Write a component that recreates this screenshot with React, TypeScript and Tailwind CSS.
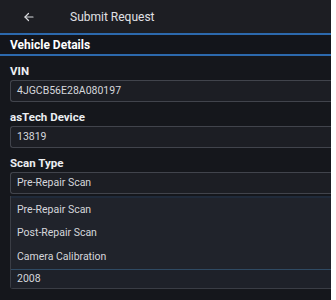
import React from 'react';

const Field: React.FC<{ label: string; value: string }> = ({ label, value }) => (
  <div className="flex flex-col pt-[8px]">
    <div className="h-[16px] flex items-center text-[11.5px] font-bold text-[#eceef2]">{label}</div>
    <div className="h-[22px] flex items-center rounded-l-[3px] border border-r-0 border-[#41444c] bg-[#1c1e24] pl-[6px] text-[10.5px] text-[#d5d7dc]">
      {value}
    </div>
  </div>
);

const App: React.FC = () => {
  const options = ['Pre-Repair Scan', 'Post-Repair Scan', 'Camera Calibration'];

  return (
    <div className="w-[336px] h-[300px] bg-white overflow-hidden" style={{ fontFamily: 'Roboto, "Noto Sans", sans-serif' }}>
      <div className="w-[331px] h-[300px] bg-[#15171c] flex flex-col">
        {/* Header */}
        <header className="h-[35px] shrink-0 flex items-center bg-[#1d1e23] border-b-2 border-[#2c69ad]">
          <svg width="12" height="12" viewBox="0 0 24 24" className="ml-[23px] text-[#d8d9dd]" fill="none" stroke="currentColor" strokeWidth="2.4" strokeLinecap="round" strokeLinejoin="round">
            <path d="M20 12H4" />
            <path d="M11 5l-7 7 7 7" />
          </svg>
          <span className="ml-[35px] text-[12px] text-[#e0e1e5]">Submit Request</span>
        </header>

        {/* Section title */}
        <div className="h-[21px] shrink-0 flex items-center px-[10px] bg-[#13151b] border-b-2 border-[#2c69ad]">
          <span className="text-[12px] font-bold text-white">Vehicle Details</span>
        </div>

        <div className="flex flex-col pl-[10px]">
          <Field label="VIN" value="4JGCB56E28A080197" />
          <Field label="asTech Device" value="13819" />
          <Field label="Scan Type" value="Pre-Repair Scan" />

          {/* Dropdown */}
          <div className="mt-[2px] flex flex-col rounded-bl-[3px] border-l border-b border-[#3a3d45] bg-[#20232b]">
            <div className="h-[2px] bg-[#1f2a3a]" />
            <div>
              {options.map((o) => (
                <div key={o} className="h-[23.5px] flex items-center pl-[6px] text-[10.5px] text-[#d5d7dc]">
                  {o}
                </div>
              ))}
            </div>
            <div className="h-[19px] flex items-center pl-[6px] border-t border-[#2f4a63] text-[10.5px] text-[#d5d7dc] bg-[#1e2129]">
              2008
            </div>
          </div>
        </div>
      </div>
    </div>
  );
};

export default App;
